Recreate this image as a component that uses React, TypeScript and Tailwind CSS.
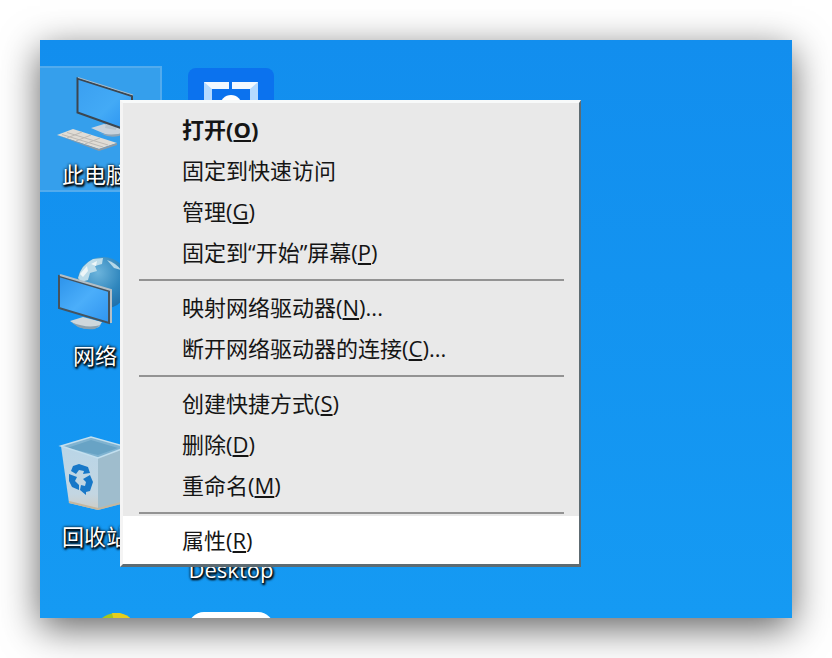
import React from "react";

type MenuEntry = { text: string; hotkey?: string; tail?: string; bold?: boolean };

const groups: MenuEntry[][] = [
  [
    { text: "打开", hotkey: "O", bold: true },
    { text: "固定到快速访问" },
    { text: "管理", hotkey: "G" },
    { text: "固定到“开始”屏幕", hotkey: "P" },
  ],
  [
    { text: "映射网络驱动器", hotkey: "N", tail: "..." },
    { text: "断开网络驱动器的连接", hotkey: "C", tail: "..." },
  ],
  [
    { text: "创建快捷方式", hotkey: "S" },
    { text: "删除", hotkey: "D" },
    { text: "重命名", hotkey: "M" },
  ],
];

function MenuItem({ entry, active = false }: { entry: MenuEntry; active?: boolean }) {
  return (
    <button
      type="button"
      role="menuitem"
      className={`flex w-full items-center pl-[59px] text-left whitespace-nowrap ${
        active ? "h-12 bg-white" : "h-[41px]"
      } ${entry.bold ? "font-bold" : ""}`}
    >
      <span>
        {entry.text}
        {entry.hotkey && (
          <>
            (<span className="underline decoration-2 underline-offset-2">{entry.hotkey}</span>)
          </>
        )}
        {entry.tail}
      </span>
    </button>
  );
}

function ContextMenu() {
  return (
    <div
      role="menu"
      className="absolute top-[60px] left-20 w-[461px] border-t-3 border-r-2 border-b-3 border-l-3 border-t-[#f8fafa] border-r-[#5d6b72] border-b-[#5d6b72] border-l-[#f4f4f4] bg-[#e9e9e9] pt-[5px] text-[#151515]"
    >
      {groups.map((entries, i) => (
        <React.Fragment key={i}>
          {entries.map((entry) => (
            <MenuItem key={entry.text} entry={entry} />
          ))}
          <div
            role="separator"
            className={`mt-[7px] mr-[15px] ml-4 h-[2px] bg-[#939393] ${
              i === groups.length - 1 ? "mb-[2px]" : "mb-[5px]"
            }`}
          />
        </React.Fragment>
      ))}
      <MenuItem entry={{ text: "属性", hotkey: "R" }} active />
    </div>
  );
}

function ComputerIcon() {
  return (
    <svg viewBox="55 72 80 86" className="h-[86px] w-20" aria-hidden="true">
      <defs>
        <linearGradient id="pcScreen" x1="0" y1="0" x2="1" y2="1">
          <stop offset="0" stopColor="#3a9ff0" />
          <stop offset="0.55" stopColor="#43aaf6" />
          <stop offset="1" stopColor="#268ff0" />
        </linearGradient>
      </defs>
      <path d="M91 128 L104 124 L128 129 L119 135 Q111 137 105 134 Z" fill="#c9d3dc" />
      <path d="M92 130 Q109 138 125 132 L119 136 Q109 138 102 134 Z" fill="#8fa5b6" />
      <path d="M107 120 L117 123 L116 130 L105 128 Z" fill="#b7c4ce" />
      <path d="M77.5 78.500 L132 96 L132 132 L77.500 112.500 Z" fill="url(#pcScreen)" stroke="#3c4650" strokeWidth="2" />
      <path d="M78 77.500 L133 95" stroke="#a9bccb" strokeWidth="1" />
      <path d="M57 135 L73 129 L117 143 L99 149 Z" fill="#e0dcd5" />
      <path d="M57 135 L99 149 L117 143 L117 145 L99 151 Z" fill="#8d9aa4" />
      <path
        d="M62 134.500 L103 147 M67 132.500 L108 145 M67 138 L82 132 M76 141 L91 135 M85 144 L100 138"
        stroke="#bdbab5"
        strokeWidth="1"
        fill="none"
      />
    </svg>
  );
}

function NetworkIcon() {
  return (
    <svg viewBox="54 253 80 86" className="h-[86px] w-20" aria-hidden="true">
      <defs>
        <radialGradient id="globe" cx="0.4" cy="0.3" r="0.75">
          <stop offset="0" stopColor="#6cb4dc" />
          <stop offset="0.6" stopColor="#2f86bd" />
          <stop offset="1" stopColor="#1f6ea8" />
        </radialGradient>
        <linearGradient id="netScreen" x1="0" y1="0" x2="1" y2="1">
          <stop offset="0" stopColor="#2d93ea" />
          <stop offset="0.5" stopColor="#4baefa" />
          <stop offset="1" stopColor="#2f94f0" />
        </linearGradient>
      </defs>
      <circle cx="102" cy="283" r="26" fill="url(#globe)" />
      <path d="M77 278 Q80 265 92 259 L102 258 L101 264 L94 266 L96 271 L89 273 L87 280 L80 282 Z" fill="#bcdcea" />
      <path d="M79 274 L86 266 L87 271 L82 277 Z M90 264 L96 261 L95 266 Z" fill="#eef6f8" />
      <path d="M106 260 Q115 263 120 270 L113 268 Z" fill="#b5d8e8" />
      <path d="M69 321 L82 317 L101 322 L98 327 Q88 330 78 327 Z" fill="#ced7dc" />
      <path d="M70 322 Q86 329 100 325 L94 329 Q84 330 77 327 Z" fill="#8ba0ad" />
      <path d="M58 276 L108 291 L108 323 L58 308 Z" fill="url(#netScreen)" stroke="#45535e" strokeWidth="2" />
      <path d="M59 275 L110 290 L110 323" stroke="#b4bfc6" strokeWidth="2" fill="none" />
    </svg>
  );
}

function RecycleIcon() {
  return (
    <svg viewBox="55 433 80 86" className="h-[86px] w-20" aria-hidden="true">
      <defs>
        <linearGradient id="binSide" x1="0" y1="0" x2="0" y2="1">
          <stop offset="0" stopColor="#b9d5e7" />
          <stop offset="0.75" stopColor="#c3d6e2" />
          <stop offset="1" stopColor="#cfccc5" />
        </linearGradient>
      </defs>
      <path d="M61 445 L91 436 L127 446 L98 457 Z" fill="#7fb3d1" />
      <path d="M67 447 L91 439 L118 447 L98 454 Z" fill="#68a3c5" />
      <path d="M61 445 L98 457 L98 509 L69 502 Z" fill="url(#binSide)" />
      <path d="M98 457 L127 446 L121 503 L98 509 Z" fill="#9fbdcd" />
      <path d="M61 445 L91 436 L127 446 L98 457 Z" fill="none" stroke="#c3dfee" strokeWidth="1.5" />
      <path d="M69 501 L98 508 L121 502" fill="none" stroke="#c3b79f" strokeWidth="2" />
      <g fill="#1878c8">
        <path d="M73 465 L79 463 L88 466 L90 472 L83 473 L84 470 L79 469 L76 473 L71 470 Z" />
        <path d="M69 473 L77 476 L75 480 L79 484 L79 489 L72 486 L69 480 Z" />
        <path d="M81 484 L85 485 L86 481 L83 478 L90 474 L93 481 L90 490 L86 491 L86 494 L80 489 Z" />
      </g>
    </svg>
  );
}

function BlueAppIcon() {
  return (
    <svg viewBox="188 68 86 86" className="h-[86px] w-[86px]" aria-hidden="true">
      <rect x="188" y="68" width="86" height="86" rx="8" fill="#0b72ee" />
      <path d="M204 82 H229 V89 H212 V140 H204 Z M232 82 H258 V140 H250 V89 H232 Z" fill="#f2f9ff" />
      <path d="M204 82 L212 89 V140 H204 Z M258 82 L250 89 V140 H258 Z" fill="#b4daff" />
      <circle cx="231" cy="106" r="11" fill="#ffffff" />
    </svg>
  );
}

function DesktopItem({ label, selected = false, children }: { label: string; selected?: boolean; children: React.ReactNode }) {
  return (
    <button
      type="button"
      className={`flex h-[126px] w-full flex-col items-center border-2 pt-1 text-white ${
        selected ? "border-[#52abed] bg-[#359fec]" : "border-transparent"
      }`}
    >
      {children}
      <span className="mt-[3px] leading-[26px] whitespace-nowrap [text-shadow:1px_2px_2px_#000,1px_1px_3px_#000,0_0_3px_#000]">
        {label}
      </span>
    </button>
  );
}

export default function App() {
  return (
    <div className="flex h-screen bg-white p-10 font-['Open_Sans','Noto_Sans_CJK_SC',sans-serif] text-[22px] leading-[30px]">
      <main className="relative flex-1 overflow-hidden bg-linear-to-b from-[#128eee] to-[#159af3] shadow-[0_10px_36px_rgba(0,0,0,0.62)]">
        <div className="-ml-3 grid auto-rows-[181px] grid-cols-[134px_138px] pt-[26px]">
          <DesktopItem label="此电脑" selected>
            <ComputerIcon />
          </DesktopItem>
          <div className="flex justify-center pt-[2px]">
            <BlueAppIcon />
          </div>
          <DesktopItem label="网络">
            <NetworkIcon />
          </DesktopItem>
          <div />
          <DesktopItem label="回收站">
            <RecycleIcon />
          </DesktopItem>
          <div className="pt-[126px] text-center text-white [text-shadow:1px_2px_2px_#000,1px_1px_3px_#000,0_0_3px_#000]">
            Desktop
          </div>
          <div className="flex justify-end pt-1 pr-6">
            <svg viewBox="0 0 44 44" className="h-11 w-11" aria-hidden="true">
              <circle cx="22" cy="22" r="22" fill="#a5c520" />
              <path d="M18 0 A22 22 0 0 1 42 13 L22 16 Z" fill="#e6cd1d" />
            </svg>
          </div>
          <div className="flex justify-center pt-[3px]">
            <div className="h-[86px] w-[86px] rounded-2xl bg-white" />
          </div>
        </div>
        <ContextMenu />
      </main>
    </div>
  );
}
